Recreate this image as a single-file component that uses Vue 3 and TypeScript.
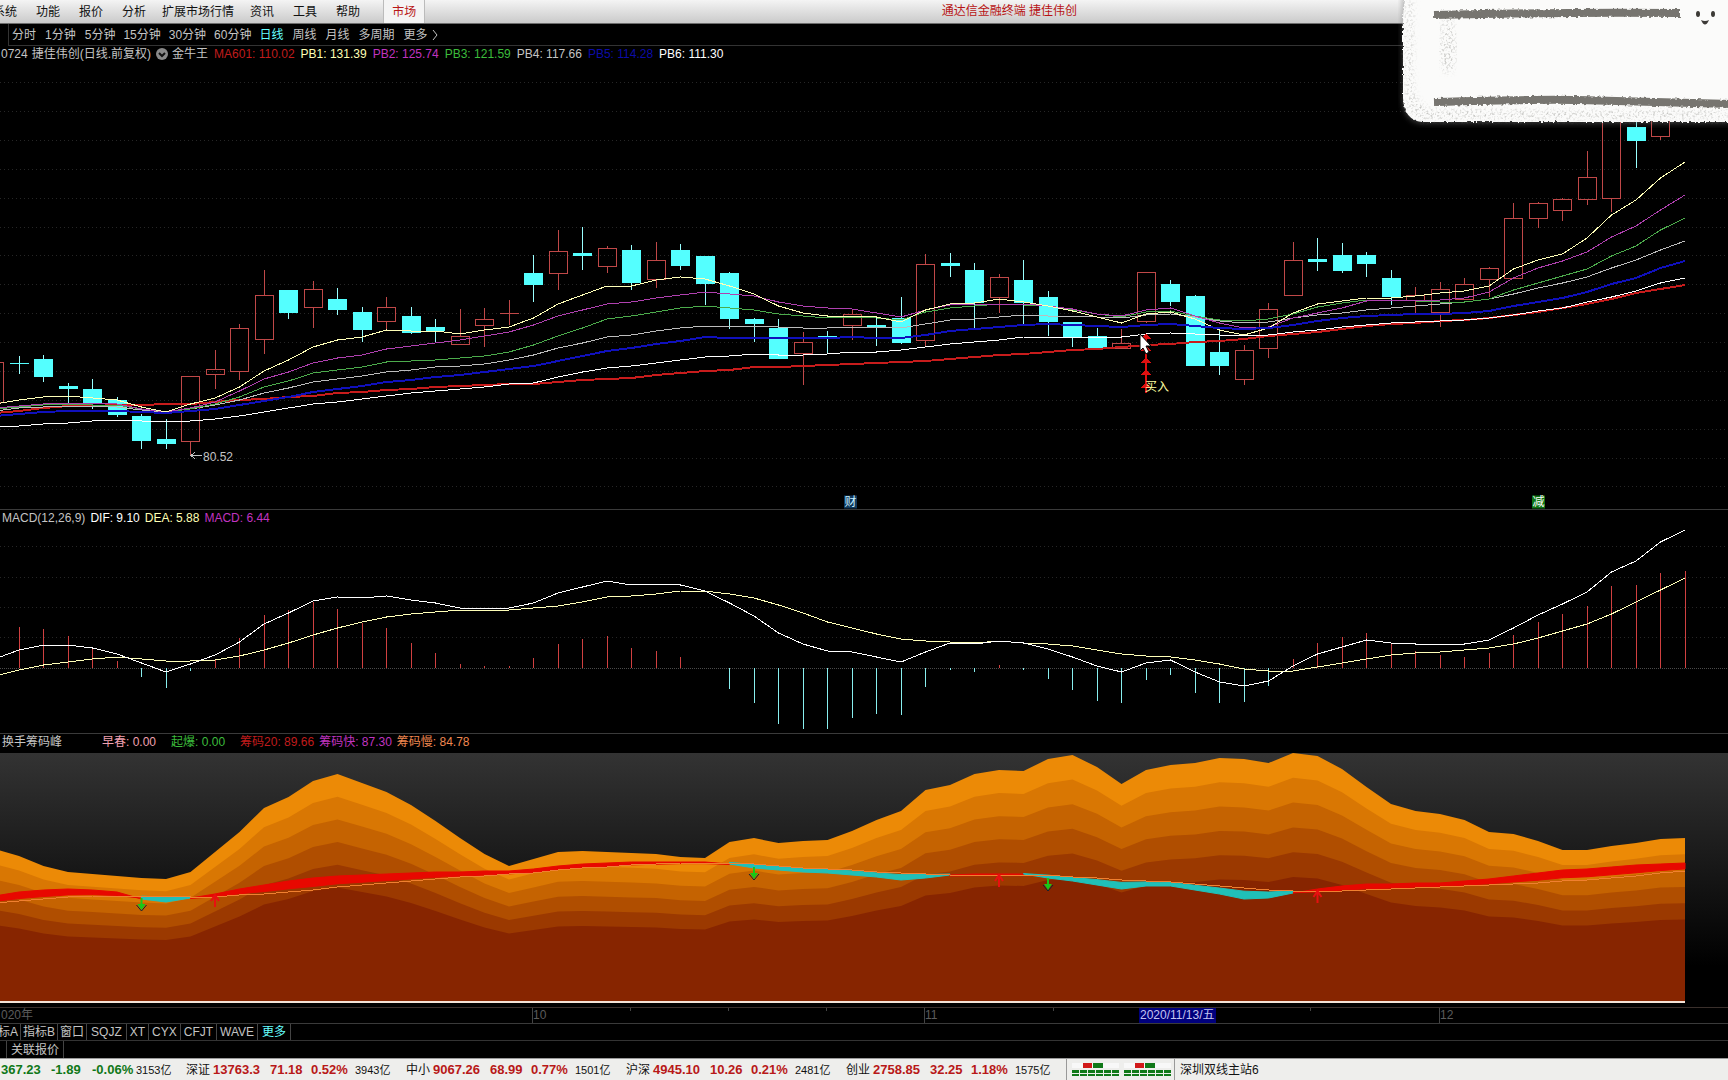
<script setup lang="ts">
type Pt = [number, number]
type Candle = { o: 'u' | 'd'; t: number; b: number; h: number; l: number }

const STEP = 24.5
const X0 = 19
const xAt = (i: number): number => X0 + STEP * i

const menuItems: string[] = ['系统', '功能', '报价', '分析', '扩展市场行情', '资讯', '工具', '帮助']
const periods: string[] = ['分时', '1分钟', '5分钟', '15分钟', '30分钟', '60分钟', '日线', '周线', '月线', '多周期', '更多']
const priceLegend = [
  { text: 'MA601: 110.02', cls: 'c-red' },
  { text: 'PB1: 131.39', cls: 'c-yellow' },
  { text: 'PB2: 125.74', cls: 'c-magenta' },
  { text: 'PB3: 121.59', cls: 'c-green' },
  { text: 'PB4: 117.66', cls: 'c-grey' },
  { text: 'PB5: 114.28', cls: 'c-blue' },
  { text: 'PB6: 111.30', cls: 'c-white' },
]
const macdLegend = [
  { text: 'MACD(12,26,9)', cls: 'c-grey' },
  { text: 'DIF: 9.10', cls: 'c-white' },
  { text: 'DEA: 5.88', cls: 'c-yellow' },
  { text: 'MACD: 6.44', cls: 'c-magenta' },
]

// [kind, body top, body bottom, high, low], first row is the bar cut by the left edge
const rawCandles: [string, number, number, number, number][] = [
  ['u', 362, 402, 362, 402], ['d', 363, 364, 356, 374], ['d', 359, 377, 355, 382], ['d', 386, 389, 383, 407],
  ['d', 389, 403, 379, 409], ['d', 400, 415, 397, 417], ['d', 416, 441, 414, 449], ['d', 439, 444, 419, 449],
  ['u', 376, 441, 376, 455], ['u', 369, 374, 350, 389], ['u', 328, 371, 324, 380], ['u', 295, 339, 270, 354],
  ['d', 290, 313, 290, 319], ['u', 289, 307, 281, 328], ['d', 299, 310, 288, 315], ['d', 312, 330, 307, 342],
  ['u', 307, 321, 297, 331], ['d', 316, 333, 307, 334], ['d', 327, 331, 319, 342], ['u', 336, 344, 309, 344],
  ['u', 319, 325, 308, 347], ['u', 313, 313, 300, 325], ['d', 273, 285, 255, 302], ['u', 251, 273, 230, 290],
  ['d', 253, 256, 227, 270], ['u', 248, 266, 246, 273], ['d', 250, 283, 245, 290], ['u', 260, 279, 242, 288],
  ['d', 250, 266, 244, 270], ['d', 256, 284, 256, 305], ['d', 273, 319, 272, 329], ['d', 319, 324, 318, 342],
  ['d', 328, 359, 319, 359], ['u', 342, 353, 332, 385], ['d', 336, 337, 331, 354], ['u', 314, 325, 309, 340],
  ['d', 325, 327, 318, 346], ['d', 318, 343, 297, 344], ['u', 264, 340, 254, 347], ['d', 263, 266, 253, 277],
  ['d', 270, 303, 263, 329], ['u', 277, 297, 274, 313], ['d', 280, 303, 260, 324], ['d', 297, 322, 291, 336],
  ['d', 322, 337, 322, 347], ['d', 336, 349, 328, 349], ['u', 343, 348, 329, 348], ['u', 272, 321, 272, 323],
  ['d', 284, 302, 280, 306], ['d', 296, 366, 295, 366], ['d', 352, 366, 331, 375], ['u', 350, 379, 345, 385],
  ['u', 309, 348, 303, 358], ['u', 260, 295, 242, 295], ['d', 259, 262, 238, 271], ['d', 255, 271, 243, 273],
  ['d', 255, 264, 252, 277], ['d', 278, 297, 270, 305], ['u', 295, 300, 287, 313], ['u', 289, 312, 282, 327],
  ['u', 284, 299, 278, 299], ['u', 268, 279, 267, 297], ['u', 218, 278, 203, 278], ['u', 203, 218, 202, 228],
  ['u', 199, 210, 198, 221], ['u', 177, 199, 151, 205], ['u', 120, 198, 118, 212], ['d', 127, 141, 118, 168],
  ['u', 118, 136, 118, 140],
]
const candles: (Candle & { x: number })[] = rawCandles.map(([o, t, b, h, l], k) => ({
  o: o as 'u' | 'd', t, b, h, l, x: Math.round(xAt(k - 1) - 0.5),
}))

const pb1 = [404, 400, 397, 396, 398, 400, 407, 412, 404, 398, 387, 371, 360, 347, 340, 337, 330, 331, 331, 334, 330, 327, 318, 304, 295, 286, 286, 280, 277, 279, 286, 294, 306, 313, 316, 316, 317, 322, 310, 304, 303, 299, 302, 306, 311, 317, 323, 314, 312, 319, 330, 335, 328, 313, 304, 301, 298, 298, 296, 293, 291, 286, 269, 260, 254, 238, 215, 200, 178, 162]
const pb2 = [408, 406, 404, 403, 403, 404, 409, 412, 408, 402, 391, 379, 372, 363, 358, 355, 349, 346, 343, 340, 336, 332, 325, 316, 310, 304, 302, 298, 295, 292, 294, 296, 302, 306, 308, 309, 313, 317, 310, 305, 304, 304, 304, 306, 309, 314, 316, 310, 308, 316, 323, 328, 327, 318, 313, 308, 301, 300, 300, 300, 298, 292, 278, 268, 261, 252, 237, 226, 210, 195]
const pb3 = [409, 407, 405, 404, 405, 405, 409, 412, 409, 404, 397, 387, 381, 373, 370, 367, 362, 361, 360, 358, 356, 352, 345, 336, 328, 319, 316, 312, 308, 306, 308, 310, 314, 316, 318, 317, 318, 320, 312, 308, 306, 304, 305, 306, 310, 314, 317, 312, 311, 316, 320, 321, 319, 314, 307, 303, 300, 300, 301, 302, 302, 299, 290, 283, 276, 269, 256, 246, 230, 218]
const pb4 = [411, 408, 407, 406, 406, 407, 410, 412, 409, 405, 400, 393, 388, 382, 379, 376, 372, 370, 367, 366, 364, 360, 355, 348, 343, 337, 335, 331, 328, 326, 326, 326, 327, 328, 328, 327, 327, 328, 324, 320, 319, 317, 315, 316, 316, 317, 318, 315, 314, 317, 321, 323, 322, 318, 315, 313, 310, 308, 306, 304, 302, 299, 294, 288, 283, 277, 268, 260, 250, 241]
const pb5 = [416, 414, 412, 411, 411, 411, 412, 413, 411, 409, 405, 401, 397, 392, 389, 386, 382, 380, 377, 375, 372, 369, 366, 361, 356, 351, 348, 344, 341, 337, 338, 338, 338, 338, 338, 337, 338, 338, 335, 331, 329, 327, 325, 324, 325, 326, 327, 325, 324, 326, 328, 329, 328, 325, 321, 318, 316, 315, 314, 314, 313, 311, 306, 302, 298, 292, 284, 278, 268, 261]
const pb6 = [427, 426, 424, 423, 421, 420, 421, 422, 421, 419, 416, 412, 408, 404, 402, 399, 396, 393, 391, 389, 387, 384, 383, 377, 372, 368, 366, 363, 360, 357, 356, 354, 355, 355, 354, 352, 352, 350, 347, 344, 342, 340, 337, 337, 337, 337, 337, 334, 333, 334, 335, 336, 335, 332, 330, 327, 325, 323, 322, 321, 320, 318, 315, 311, 308, 302, 297, 291, 283, 278]
const ma601 = [413, 411, 408, 406, 406, 405, 405, 404, 404, 402, 400, 399, 397, 396, 393, 392, 390, 389, 387, 386, 385, 384, 384, 382, 380, 379, 378, 375, 373, 371, 370, 367, 367, 366, 365, 364, 363, 362, 361, 359, 357, 355, 354, 352, 350, 349, 347, 345, 344, 342, 341, 339, 336, 334, 332, 329, 326, 324, 323, 321, 320, 318, 315, 312, 308, 304, 299, 293, 289, 285]
const maLines = [
  { cls: 'l-red', d: ma601 }, { cls: 'l-grey', d: pb4 }, { cls: 'l-green', d: pb3 },
  { cls: 'l-magenta', d: pb2 }, { cls: 'l-yellow', d: pb1 }, { cls: 'l-blue', d: pb5 }, { cls: 'l-white', d: pb6 },
]

const ZERO = 668
const bars = [627, 629, 636, 649, 661, 677, 688, 671, 659, 638, 615, 610, 602, 609, 623, 628, 643, 653, 664, 666, 666, 658, 644, 639, 636, 648, 651, 657, 668, 689, 703, 724, 729, 729, 718, 714, 715, 687, 670, 672, 665, 670, 679, 690, 701, 703, 680, 675, 693, 703, 702, 686, 659, 643, 637, 633, 644, 651, 655, 657, 653, 635, 622, 614, 606, 586, 585, 573, 571]
const dif = [659, 650, 645, 645, 648, 654, 663, 672, 664, 655, 642, 624, 613, 601, 597, 598, 596, 600, 603, 608, 609, 608, 603, 593, 587, 581, 585, 584, 585, 591, 603, 616, 633, 644, 651, 652, 657, 662, 652, 643, 644, 641, 643, 649, 657, 666, 672, 663, 660, 672, 682, 686, 681, 666, 654, 647, 640, 643, 644, 644, 644, 640, 628, 615, 604, 592, 572, 561, 542, 530]
const dea = [676, 670, 665, 662, 659, 657, 659, 661, 661, 660, 656, 650, 643, 635, 628, 622, 617, 614, 612, 610, 610, 610, 608, 606, 602, 597, 596, 594, 591, 591, 594, 598, 605, 613, 622, 628, 634, 639, 641, 642, 643, 641, 643, 644, 646, 650, 654, 656, 657, 660, 664, 669, 671, 671, 667, 663, 659, 655, 653, 652, 650, 648, 644, 638, 631, 624, 614, 602, 590, 578]

const BASE = 1001
const chip = [849, 856, 866, 872, 874, 876, 878, 879, 872, 852, 832, 808, 797, 781, 774, 783, 792, 805, 821, 838, 854, 866, 859, 852, 851, 852, 853, 854, 857, 858, 842, 838, 843, 841, 840, 831, 820, 811, 790, 785, 774, 770, 771, 759, 755, 767, 784, 770, 765, 763, 758, 759, 763, 753, 756, 769, 787, 804, 811, 814, 820, 832, 834, 841, 850, 850, 846, 843, 839, 838]
const fast = [896, 892, 890, 889, 890, 892, 899, 902, 898, 894, 889, 885, 881, 878, 876, 875, 874, 873, 872, 872, 871, 871, 869, 866, 864, 863, 862, 862, 862, 862, 864, 868, 870, 872, 873, 875, 877, 880, 878, 875, 874, 874, 874, 878, 881, 885, 889, 886, 886, 890, 894, 899, 898, 893, 889, 886, 884, 884, 883, 883, 881, 879, 876, 873, 870, 869, 867, 865, 864, 863]
const slow = [903, 901, 899, 897, 896, 896, 896, 896, 897, 897, 895, 894, 892, 890, 887, 885, 883, 881, 879, 877, 876, 874, 873, 870, 868, 867, 865, 864, 863, 863, 863, 864, 866, 868, 869, 870, 872, 873, 874, 875, 875, 875, 875, 875, 877, 878, 880, 881, 882, 884, 886, 888, 890, 891, 892, 891, 890, 889, 888, 887, 886, 885, 884, 883, 881, 880, 878, 876, 873, 871]
const layers = [
  { f: 1, fill: '#ec8a06' }, { f: 0.9, fill: '#d97703' }, { f: 0.8, fill: '#c56301' },
  { f: 0.7, fill: '#b04e00' }, { f: 0.6, fill: '#9b3900' }, { f: 0.5, fill: '#872500' },
]

const toPts = (ys: number[]): Pt[] => ys.map((y, k) => [xAt(k - 1), y])
const line = (ys: number[]): string => toPts(ys).map((p) => p.join(',')).join(' ')
const area = (f: number): string =>
  `${xAt(-1)},${BASE} ` + line(chip.map((y) => BASE - (BASE - y) * f)) + ` ${xAt(68)},${BASE}`

// one quad between each pair of bars; colour follows which average leads
const ribbon = fast.slice(0, -1).map((a, k) => {
  const b = fast[k + 1]
  const inner = (f: number, s: number): number => f + (s - f) * 0.62
  const x1 = xAt(k - 1)
  const x2 = xAt(k)
  const up = a + b <= slow[k] + slow[k + 1]
  const pad = up ? 1 : -1
  return {
    fill: up ? '#e80800' : '#20c0b8',
    pts: `${x1},${a} ${x2},${b} ${x2},${inner(b, slow[k + 1]) + pad} ${x1},${inner(a, slow[k]) + pad}`,
  }
})
const ups = [{ i: 8, y: 895 }, { i: 40, y: 875 }, { i: 53, y: 891 }]
const downs = [{ i: 5, y: 911 }, { i: 30, y: 880 }, { i: 42, y: 891 }]

const priceGrid = [82, 111, 140, 169, 198, 227, 255, 284, 313, 342, 371, 400, 429, 458, 486]
const macdGrid = [546, 577, 607, 637]
const buyHeads = [333, 345, 357, 369, 382]

const place = (x: number, y: number) => ({
  left: (x / 1728) * 100 + '%',
  top: ((y - 63) / 446) * 100 + '%',
})
const left = (x: number) => ({ left: (x / 1728) * 100 + '%' })
const months = [{ x: 532, t: '10' }, { x: 924, t: '11' }, { x: 1439, t: '12' }]
const ticks = [630, 728, 826, 1053, 1310]

const indicatorTabs: string[] = ['标A', '指标B', '窗口', 'SQJZ', 'XT', 'CYX', 'CFJT', 'WAVE', '更多']
const quotes = [
  { n: '', p: '367.23', c: '-1.89', r: '-0.06%', v: '3153亿', down: true },
  { n: '深证', p: '13763.3', c: '71.18', r: '0.52%', v: '3943亿', down: false },
  { n: '中小', p: '9067.26', c: '68.99', r: '0.77%', v: '1501亿', down: false },
  { n: '沪深', p: '4945.10', c: '10.26', r: '0.21%', v: '2481亿', down: false },
  { n: '创业', p: '2758.85', c: '32.25', r: '1.18%', v: '1575亿', down: false },
]
</script>

<template>
  <div class="terminal">
    <header class="menubar">
      <nav class="menu">
        <button v-for="m in menuItems" :key="m" type="button" :class="{ wide: m.length > 2 }">{{ m }}</button>
        <button type="button" class="market">市场</button>
      </nav>
      <h1 class="title">通达信金融终端 捷佳伟创</h1>
    </header>

    <nav class="periods">
      <button v-for="p in periods" :key="p" type="button" :class="{ active: p === '日线' }">{{ p }}</button>
      <svg class="chev" viewBox="0 0 6 12" width="6" height="12"><path d="M1 1 L5 6 L1 11" /></svg>
    </nav>

    <section class="panel price">
      <div class="legend">
        <span class="code">0724</span>
        <span class="name">捷佳伟创(日线.前复权)</span>
        <svg class="drop" viewBox="0 0 12 12" width="12" height="12">
          <circle cx="6" cy="6" r="6" /><path d="M3 5 L6 8 L9 5" />
        </svg>
        <span class="formula">金牛王</span>
        <span v-for="l in priceLegend" :key="l.text" :class="l.cls">{{ l.text }}</span>
      </div>
      <div class="plot">
        <svg viewBox="0 63 1728 446" preserveAspectRatio="none" shape-rendering="crispEdges">
          <line v-for="y in priceGrid" :key="y" x1="0" x2="1728" :y1="y + 0.5" :y2="y + 0.5" class="grid" />
          <g v-for="(c, k) in candles" :key="k" :class="c.o === 'u' ? 'up' : 'down'">
            <line :x1="c.x + 0.5" :x2="c.x + 0.5" :y1="c.h" :y2="c.o === 'u' ? c.t : c.l" />
            <line v-if="c.o === 'u'" :x1="c.x + 0.5" :x2="c.x + 0.5" :y1="c.b" :y2="c.l" />
            <line v-if="c.t === c.b" :x1="c.x - 9" :x2="c.x + 10" :y1="c.t + 0.5" :y2="c.t + 0.5" />
            <rect v-else-if="c.o === 'u'" :x="c.x - 8.5" :y="c.t + 0.5" width="18" :height="c.b - c.t" />
            <rect v-else :x="c.x - 9" :y="c.t" width="19" :height="c.b - c.t" />
          </g>
          <polyline v-for="m in maLines" :key="m.cls" :class="m.cls" class="ma" :points="line(m.d)" />
          <g class="buy">
            <rect x="1145" y="336" width="2" height="57" />
            <path v-for="y in buyHeads" :key="y" :d="`M1146 ${y} l5 6 h-10 z`" />
          </g>
          <path class="lowmark" d="M202 455.5 H191 M195 452 L191 455.5 L195 459" />
          <path class="cursor" shape-rendering="auto" d="M1140 334 V351 L1143 348 L1146 354 L1149 352 L1146 346 H1151 Z" />
        </svg>
        <span class="mark low" :style="place(203, 457)">80.52</span>
        <span class="mark buytext" :style="place(1145, 387)">买入</span>
        <span class="mark badge blue" :style="place(844, 502)">财</span>
        <span class="mark badge green" :style="place(1532, 502)">减</span>
      </div>
    </section>

    <section class="panel macd">
      <div class="legend">
        <span v-for="l in macdLegend" :key="l.text" :class="l.cls">{{ l.text }}</span>
      </div>
      <div class="plot">
        <svg viewBox="0 526 1728 207" preserveAspectRatio="none" shape-rendering="crispEdges">
          <line v-for="y in macdGrid" :key="y" x1="0" x2="1728" :y1="y + 0.5" :y2="y + 0.5" class="grid" />
          <line x1="0" x2="1728" y1="668.5" y2="668.5" class="zero" />
          <line
            v-for="(b, i) in bars" :key="i" :class="b < ZERO ? 'bar-up' : 'bar-down'"
            :x1="Math.round(xAt(i) - 0.5) + 0.5" :x2="Math.round(xAt(i) - 0.5) + 0.5" :y1="ZERO" :y2="b"
          />
          <polyline class="ma l-yellow" :points="line(dea)" />
          <polyline class="ma l-white" :points="line(dif)" />
        </svg>
      </div>
    </section>

    <section class="panel chip">
      <div class="legend">
        <span class="chipname">换手筹码峰</span>
        <span class="c-pink wide">早春: 0.00</span>
        <span class="c-lime wide">起爆: 0.00</span>
        <span class="c-red">筹码20: 89.66</span>
        <span class="c-magenta">筹码快: 87.30</span>
        <span class="c-orange">筹码慢: 84.78</span>
      </div>
      <div class="plot">
        <svg viewBox="0 753 1728 254" preserveAspectRatio="none">
          <polygon v-for="l in layers" :key="l.f" :points="area(l.f)" :fill="l.fill" />
          <polygon v-for="(r, k) in ribbon" :key="k" :points="r.pts" :fill="r.fill" :stroke="r.fill" stroke-width="1" />
          <polyline class="slow" :points="line(slow)" shape-rendering="crispEdges" />
          <rect x="0" y="1001" width="1685" height="2" fill="#f4e2d6" />
          <g v-for="u in ups" :key="u.i" class="arrow-up">
            <path :d="`M${xAt(u.i)} ${u.y + 12} V${u.y + 2} M${xAt(u.i) - 4} ${u.y + 6} L${xAt(u.i)} ${u.y} L${xAt(u.i) + 4} ${u.y + 6}`" />
          </g>
          <g v-for="d in downs" :key="d.i" class="arrow-down">
            <path class="shade" :d="`M${xAt(d.i) - 5} ${d.y - 6} L${xAt(d.i)} ${d.y} L${xAt(d.i) + 5} ${d.y - 6}`" />
            <path class="head" :d="`M${xAt(d.i) - 4} ${d.y - 7} H${xAt(d.i) + 4} L${xAt(d.i)} ${d.y - 1} Z`" />
            <path class="stem" :d="`M${xAt(d.i)} ${d.y - 13} V${d.y - 4}`" />
          </g>
        </svg>
      </div>
    </section>

    <div class="axis">
      <span class="year">020年</span>
      <span v-for="m in months" :key="m.x" class="month" :style="left(m.x)">{{ m.t }}</span>
      <i v-for="t in ticks" :key="t" class="tick" :style="left(t)"></i>
      <span class="date" :style="left(1139)">2020/11/13/五</span>
    </div>

    <nav class="tabs">
      <button v-for="t in indicatorTabs" :key="t" type="button" :class="{ active: t === '更多' }">{{ t }}</button>
    </nav>
    <nav class="tabs related">
      <button type="button">关联报价</button>
    </nav>

    <footer class="status">
      <div v-for="q in quotes" :key="q.p" class="quote" :class="{ falling: q.down, lead: !q.n }">
        <span v-if="q.n">{{ q.n }}</span>
        <b>{{ q.p }}</b>
        <b>{{ q.c }}</b>
        <b>{{ q.r }}</b>
        <span class="vol">{{ q.v }}</span>
      </div>
      <div class="meters">
        <svg v-for="g in 2" :key="g" viewBox="0 0 47 14" width="47" height="14" shape-rendering="crispEdges">
          <rect width="47" height="5" fill="#f8f8f8" />
          <rect x="11" width="9" height="5" fill="#d01818" />
          <rect x="21" width="10" height="5" fill="#107818" />
          <template v-for="n in 6" :key="n">
            <rect :x="(n - 1) * 8" y="7" width="7" height="3" fill="#107818" />
            <rect :x="(n - 1) * 8" y="11" width="7" height="2" fill="#107818" />
          </template>
        </svg>
      </div>
      <span class="host">深圳双线主站6</span>
    </footer>

    <svg class="note" viewBox="0 0 330 128" width="330" height="128">
      <defs>
        <filter id="rough" x="-5%" y="-5%" width="110%" height="110%">
          <feTurbulence type="fractalNoise" baseFrequency="0.35" numOctaves="2" seed="4" result="n" />
          <feDisplacementMap in="SourceGraphic" in2="n" scale="4" />
          <feGaussianBlur stdDeviation="0.6" />
        </filter>
        <filter id="grain" x="-5%" y="-5%" width="110%" height="110%">
          <feTurbulence type="fractalNoise" baseFrequency="0.45" numOctaves="2" seed="9" />
          <feColorMatrix values="0 0 0 0 0.5  0 0 0 0 0.5  0 0 0 0 0.48  3 0 0 0 -1.45" result="g" />
          <feGaussianBlur in="SourceAlpha" stdDeviation="3" result="fade" />
          <feComposite in="g" in2="fade" operator="in" />
        </filter>
        <filter id="soft" x="-5%" y="-10%" width="110%" height="120%"><feGaussianBlur stdDeviation="3" /></filter>
      </defs>
      <path d="M5 -10 V100 Q6 122 26 123 H345 V-10 Z" fill="#777" filter="url(#soft)" opacity="0.6" />
      <path d="M9 -10 Q4 10 5 30 V98 Q6 120 24 122 H345 V-10 Z" fill="#fbfbfa" filter="url(#rough)" />
      <path d="M10 0 Q8 10 8 30 V94 Q9 117 26 119 H330 V110 H34 Q18 104 15 88 V0 Z" fill="#fff" filter="url(#grain)" />
      <ellipse cx="50" cy="46" rx="8" ry="28" fill="#fff" filter="url(#grain)" />
      <g filter="url(#rough)">
        <path class="brush" d="M36 15 Q160 12 282 13" />
        <path class="brush" d="M36 102 Q140 99 180 100 T335 104" />
      </g>
      <g fill="#3c3a36">
        <ellipse cx="300" cy="14" rx="2" ry="3" /><ellipse cx="315" cy="14" rx="2" ry="3" />
        <path d="M303 20 Q307 29 311 20 Q307 22 303 20 Z" />
      </g>
    </svg>
  </div>
</template>

<style>
html, body { background: #000; }
</style>

<style scoped>
.terminal {
  position: relative;
  display: flex;
  flex-direction: column;
  min-height: 100vh;
  overflow: hidden;
  background: #000;
  color: #c4c4c4;
  font: 12px/16px "Liberation Sans", "Noto Sans CJK SC", sans-serif;
  white-space: nowrap;
}
button {
  margin: 0;
  padding: 0;
  border: 0;
  background: none;
  color: inherit;
  font: inherit;
}
.menubar {
  position: relative;
  box-sizing: border-box;
  height: 24px;
  display: flex;
  background: linear-gradient(#f4f4f4, #cacaca);
  border-bottom: 1px solid #6c6c6c;
  color: #111;
}
.menu { display: flex; gap: 19px; margin-left: -7px; }
.menu .wide { margin: 0 -3px; }
.menu .market {
  margin-left: 4px;
  padding: 0 8px;
  background: #f4f4f4;
  border-left: 1px solid #bbb;
  border-right: 1px solid #bbb;
  color: #b81818;
}
.title {
  position: absolute;
  left: 54.5%;
  top: 3px;
  margin: 0;
  font: inherit;
  color: #b81414;
}
.periods {
  box-sizing: border-box;
  height: 21px;
  display: flex;
  align-items: center;
  gap: 9px;
  padding-left: 3px;
  margin-left: 8px;
  border-left: 1px solid #333;
  box-shadow: -8px 1px 0 -1px #000, 0 1px 0 #333;
}
.periods button:nth-child(n + 4) { margin-left: -1px; }
.periods button:nth-child(n + 8) { margin-left: 0; }
.periods .active, .tabs .active { color: #6ff; }
.chev { margin-left: -5px; }
.chev path { fill: none; stroke: #c4c4c4; }

.panel {
  box-sizing: border-box;
  display: flex;
  flex-direction: column;
  border-bottom: 1px solid #3a3a3a;
}
.price { flex: 465 1 465px; }
.macd { flex: 224 1 224px; }
.chip { flex: 273 1 273px; border-bottom: 0; }
.legend {
  flex: none;
  display: flex;
  align-items: center;
  gap: 6px;
  height: 18px;
  padding-left: 2px;
}
.price .legend { padding-left: 1px; }
.code { margin-right: -2px; }
.drop { margin: 0 -2px 0 -1px; }
.drop circle { fill: #8a8a8a; }
.drop path { fill: none; stroke: #111; stroke-width: 2; }
.macd .legend { height: 16px; gap: 5px; }
.chip .legend { height: 16px; padding-bottom: 3px; gap: 5px; }
.chipname { margin-right: 35px; }
.chip .legend .wide { margin-right: 10px; }
.plot { position: relative; flex: 1 1 0; min-height: 0; }
.plot > svg { position: absolute; inset: 0; width: 100%; height: 100%; display: block; }
.chip .plot { background: linear-gradient(#333, #000 84%); }

.c-red { color: #c01c1c; }
.c-yellow { color: #ffffb4; }
.c-magenta { color: #c034c0; }
.c-green, .c-lime { color: #3cbc3c; }
.c-grey { color: #c4c4c4; }
.c-blue { color: #0c0ca8; }
.c-white { color: #fff; }
.c-pink { color: #f0a0b0; }
.c-orange { color: #f08850; }

.grid { stroke: #262626; stroke-dasharray: 1 3; }
.zero { stroke: #4a4a4a; stroke-dasharray: 1 1; }
.up line, .up rect { stroke: #c04848; fill: none; }
.down line { stroke: #9ff; }
.down rect { fill: #54ffff; }
.ma { fill: none; stroke-width: 1; }
.l-red { stroke: #c81c1c; stroke-width: 2; }
.l-yellow { stroke: #ffffb8; }
.l-magenta { stroke: #b040b0; }
.l-green { stroke: #4cac4c; }
.l-grey { stroke: #bcbcbc; }
.l-blue { stroke: #1010bc; stroke-width: 2; }
.l-white { stroke: #fff; }
.bar-up { stroke: #d04040; }
.bar-down { stroke: #8ee; }
.slow { fill: none; stroke: #f08030; }
.buy { fill: #e01010; }
.lowmark { fill: none; stroke: #c4c4c4; }
.cursor { fill: #fff; stroke: #000; }
.arrow-up path { fill: none; stroke: #e81010; stroke-width: 2; }
.arrow-down .shade { fill: none; stroke: #123; stroke-width: 1; }
.arrow-down .head { fill: #18c818; }
.arrow-down .stem { stroke: #18c818; stroke-width: 2; }

.mark { position: absolute; transform: translateY(-50%); line-height: 14px; }
.buytext { color: #ffffa0; }
.badge { width: 13px; line-height: 13px; text-align: center; color: #fff; }
.blue { background: #10385c; color: #c8f0ff; }
.green { background: #0c7414; }

.axis {
  position: relative;
  box-sizing: border-box;
  height: 17px;
  border-top: 1px solid #3a302c;
  border-bottom: 1px solid #3a3a3a;
  color: #5c5c5c;
  line-height: 15px;
}
.year { padding-left: 1px; }
.month, .tick, .date { position: absolute; top: 0; height: 15px; }
.month { border-left: 1px solid #444; }
.tick { width: 1px; height: 3px; background: #444; }
.date { padding: 0 1px; background: #00007c; color: #c4c4f0; }

.tabs {
  box-sizing: border-box;
  height: 17px;
  display: flex;
  border-bottom: 1px solid #333;
}
.tabs button { padding: 0 3px; border-right: 1px solid #444; line-height: 16px; }
.tabs button:nth-child(1) { margin-left: -2px; padding: 0 2px 0 0; }
.tabs button:nth-child(2), .tabs button:nth-child(3) { padding: 0 2px; }
.tabs button:nth-child(4), .tabs button:nth-child(9) { padding: 0 4px; }
.tabs.related { height: 18px; border-bottom: 1px solid #999; }
.tabs.related button { margin-left: 6px; padding: 0 4px; border-left: 1px solid #444; }

.status {
  height: 21px;
  display: flex;
  align-items: center;
  background: #eeeeec;
  color: #111;
}
.quote {
  flex: none;
  display: grid;
  grid-template-columns: 27px 57px 41px 44px 51px;
  align-items: center;
}
.quote.lead { grid-template-columns: 50px 41px 44px 50px; padding-left: 1px; }
.quote b { font-size: 13px; color: #b81818; }
.quote.falling b { color: #107818; }
.vol { font-size: 11px; }
.meters {
  display: flex;
  align-items: center;
  gap: 5px;
  height: 21px;
  box-sizing: border-box;
  padding: 0 3px 0 5px;
  border-left: 1px solid #999;
  border-right: 1px solid #999;
}
.host { padding-left: 5px; }

.note { position: absolute; top: 0; right: 0; }
.brush { fill: none; stroke: #77756f; stroke-width: 8; }
</style>
